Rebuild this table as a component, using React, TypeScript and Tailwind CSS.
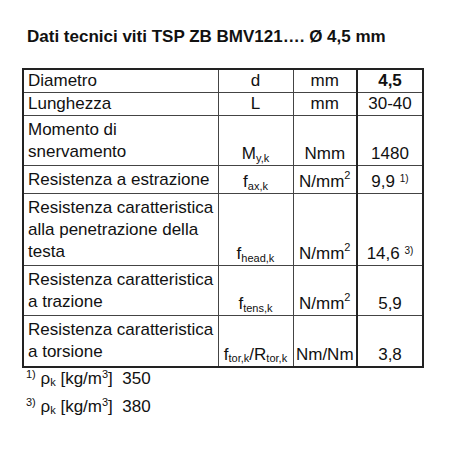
import type { ReactNode } from "react";

type Row = {
  label: ReactNode;
  symbol: ReactNode;
  unit: ReactNode;
  value: ReactNode;
  h: string;
  bold?: boolean;
};

const sq = <sup className="relative -top-[1px] text-[11px] align-super leading-none">2</sup>;

const rows: Row[] = [
  { label: "Diametro", symbol: "d", unit: "mm", value: "4,5", h: "h-[23px]", bold: true },
  { label: "Lunghezza", symbol: "L", unit: "mm", value: "30-40", h: "h-[21px]" },
  {
    label: (
      <>
        Momento di
        <br />
        snervamento
      </>
    ),
    symbol: (
      <>
        M<sub className="text-[11px] leading-none">y,k</sub>
      </>
    ),
    unit: "Nmm",
    value: "1480",
    h: "h-[50px]",
  },
  {
    label: "Resistenza a estrazione",
    symbol: (
      <>
        f<sub className="text-[11px] leading-none">ax,k</sub>
      </>
    ),
    unit: <>N/mm{sq}</>,
    value: (
      <>
        9,9 <sup className="text-[10px] leading-none">1)</sup>
      </>
    ),
    h: "h-[28px]",
  },
  {
    label: (
      <>
        Resistenza caratteristica
        <br />
        alla penetrazione della
        <br />
        testa
      </>
    ),
    symbol: (
      <>
        f<sub className="text-[11px] leading-none">head,k</sub>
      </>
    ),
    unit: <>N/mm{sq}</>,
    value: (
      <>
        14,6 <sup className="text-[10px] leading-none">3)</sup>
      </>
    ),
    h: "h-[72px]",
  },
  {
    label: (
      <>
        Resistenza caratteristica
        <br />a trazione
      </>
    ),
    symbol: (
      <>
        f<sub className="text-[11px] leading-none">tens,k</sub>
      </>
    ),
    unit: <>N/mm{sq}</>,
    value: "5,9",
    h: "h-[50px]",
  },
  {
    label: (
      <>
        Resistenza caratteristica
        <br />a torsione
      </>
    ),
    symbol: (
      <>
        f<sub className="text-[11px] leading-none">tor,k</sub>/R
        <sub className="text-[11px] leading-none">tor,k</sub>
      </>
    ),
    unit: "Nm/Nm",
    value: "3,8",
    h: "h-[51px]",
  },
];

export default function App() {
  return (
    <div className="h-[450px] w-[450px] bg-white text-[#111] font-['Liberation_Sans',Arial,sans-serif]">
      <div className="pl-[27px] pt-[26px] text-[17px] font-bold leading-[22px]">
        Dati tecnici viti TSP ZB BMV121…. Ø 4,5 mm
      </div>

      <table className="ml-[22px] mt-[20px] w-[400px] table-fixed border-collapse border-2 border-[#222] text-[17px] leading-[22px]">
        <colgroup>
          <col className="w-[195px]" />
          <col className="w-[75px]" />
          <col className="w-[64px]" />
          <col className="w-[66px]" />
        </colgroup>
        <tbody>
          {rows.map((r, i) => (
            <tr key={i} className={r.h}>
              <td className="border border-[#444] px-[4px] py-0 align-middle whitespace-nowrap">{r.label}</td>
              <td className="border border-[#444] p-0 text-center align-bottom whitespace-nowrap">
                {r.symbol}
              </td>
              <td className="border border-[#444] p-0 text-center align-bottom whitespace-nowrap">
                {r.unit}
              </td>
              <td
                className={
                  "border border-l-2 border-[#444] border-l-[#222] p-0 text-center align-bottom whitespace-nowrap" +
                  (r.bold ? " font-bold" : "")
                }
              >
                {r.value}
              </td>
            </tr>
          ))}
        </tbody>
      </table>

      <div className="-mt-[3px] pl-[26px] text-[17px] leading-[28px]">
        <div>
          <sup className="text-[11px] leading-none">1)</sup> ρ<sub className="text-[11px] leading-none">k</sub> [kg/m
          <sup className="text-[11px] leading-none">3</sup>]&nbsp; 350
        </div>
        <div>
          <sup className="text-[11px] leading-none">3)</sup> ρ<sub className="text-[11px] leading-none">k</sub> [kg/m
          <sup className="text-[11px] leading-none">3</sup>]&nbsp; 380
        </div>
      </div>
    </div>
  );
}
